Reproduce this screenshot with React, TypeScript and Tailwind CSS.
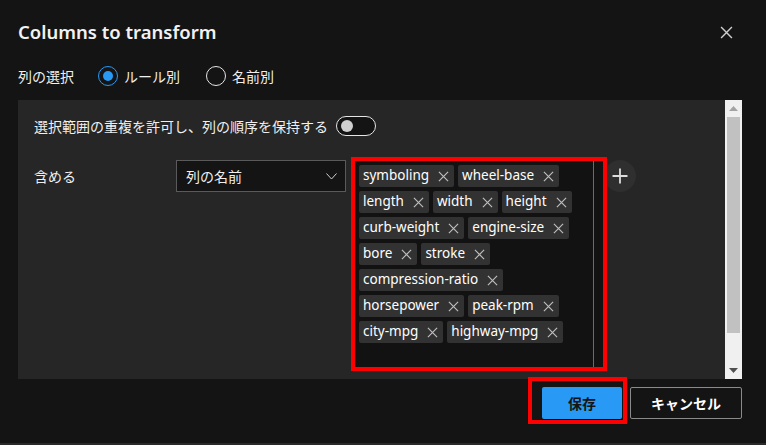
import { useState } from 'react';

const FONT = { fontFamily: '"Noto Sans", "Noto Sans CJK JP", sans-serif' };

const COLUMNS = [
  'symboling', 'wheel-base', 'length', 'width', 'height', 'curb-weight', 'engine-size',
  'bore', 'stroke', 'compression-ratio', 'horsepower', 'peak-rpm', 'city-mpg', 'highway-mpg',
];

const XIcon = ({ size = 11, className = '' }: { size?: number; className?: string }) => (
  <svg width={size} height={size} viewBox="0 0 12 12" className={className}>
    <path d="M1 1 L11 11 M11 1 L1 11" stroke="currentColor" strokeWidth="1.3" fill="none" />
  </svg>
);

function Radio({ checked, label }: { checked: boolean; label: string }) {
  return (
    <label className="flex items-center gap-[6px] cursor-pointer">
      <span
        className={
          'w-5 h-5 rounded-full border-[1.5px] flex items-center justify-center ' +
          (checked ? 'border-[#2899f5]' : 'border-[#e6e6e6]')
        }
      >
        {checked && <span className="w-[10px] h-[10px] rounded-full bg-[#2899f5]" />}
      </span>
      <span className="text-[14px] text-[#f0f0f0]">{label}</span>
    </label>
  );
}

function Tag({ name }: { name: string }) {
  return (
    <span className="h-[22px] flex items-center bg-[#323232] rounded-[2px] pl-[4px] pr-[5px] text-[13.5px] text-white leading-none">
      <span>{name}</span>
      <XIcon className="ml-[9px] text-[#bdbdbd]" />
    </span>
  );
}

export default function App() {
  const [mode, setMode] = useState('rule');
  return (
    <div style={FONT} className="w-[766px] h-[445px] bg-[#141414] flex flex-col overflow-hidden">
      <div className="flex items-center justify-between pl-[18px] pr-[33px] pt-[20px] h-[44px]">
        <h1 className="text-[18.5px] font-semibold text-[#f2f2f2] leading-6">Columns to transform</h1>
        <button className="text-[#cfcfcf]">
          <XIcon size={13} />
        </button>
      </div>

      <div className="flex items-center pl-[18px] mt-[22px] h-5 text-[14px] text-[#f0f0f0]">
        <span className="w-[80px]">列の選択</span>
        <div className="flex items-center gap-[26px]" onClick={() => setMode(mode === 'rule' ? 'name' : 'rule')}>
          <Radio checked={mode === 'rule'} label="ルール別" />
          <Radio checked={mode === 'name'} label="名前別" />
        </div>
      </div>

      <div className="flex ml-[18px] mr-[24px] mt-[14px] h-[279px]">
        <div className="flex-1 bg-[#262626] pl-4 pt-4">
          <div className="flex items-center h-5 gap-[8px]">
            <span className="text-[14px] text-[#f0f0f0]">選択範囲の重複を許可し、列の順序を保持する</span>
            <span className="w-10 h-5 rounded-full border-[1.5px] border-[#e6e6e6] bg-[#141414] flex items-center pl-[4px]">
              <span className="w-3 h-3 rounded-full bg-[#cfcfcf]" />
            </span>
          </div>

          <div className="flex items-start mt-[21px]">
            <span className="w-[142px] h-8 mt-[3px] flex items-center text-[14px] text-[#f0f0f0]">含める</span>
            <div className="w-[170px] h-8 mt-[3px] border border-[#5a5a5a] bg-[#141414] flex items-center justify-between pl-[9px] pr-[8px]">
              <span className="text-[14px] text-[#f0f0f0]">列の名前</span>
              <svg width="11" height="7" viewBox="0 0 11 7">
                <path d="M0.5 0.5 L5.5 6 L10.5 0.5" stroke="#cfcfcf" strokeWidth="1" fill="none" />
              </svg>
            </div>
            <div className="relative z-10 ml-[5px] w-[256px] h-[214px] border-4 border-[#ff0000] bg-[#121212] flex">
              <div className="w-[239px] h-full border-r border-[#6a6a6a] flex flex-wrap content-start gap-x-[4px] gap-y-[4px] pl-[4px] pt-[4px] pr-[2px]">
                {COLUMNS.map(c => <Tag key={c} name={c} />)}
              </div>
            </div>
            <button className="ml-[-3px] mt-[3px] w-8 h-8 rounded-full bg-[#2f2f2f] flex items-center justify-center">
              <svg width="16" height="16" viewBox="0 0 16 16">
                <path d="M8 0.5 V15.5 M0.5 8 H15.5" stroke="#dcdcdc" strokeWidth="1.8" fill="none" />
              </svg>
            </button>
          </div>
        </div>

        <div className="w-[17px] bg-[#f0f0f0] flex flex-col items-center">
          <svg width="9" height="5" viewBox="0 0 9 5" className="mt-[6px]">
            <path d="M0 5 L4.5 0 L9 5 Z" fill="#a3a3a3" />
          </svg>
          <div className="w-[13px] h-[216px] bg-[#c1c1c1] mt-[6px]" />
          <div className="flex-1" />
          <svg width="9" height="5" viewBox="0 0 9 5" className="mb-[6px]">
            <path d="M0 0 L9 0 L4.5 5 Z" fill="#505050" />
          </svg>
        </div>
      </div>

      <div className="flex justify-end items-start mr-[24px] mt-[-2px] gap-[3px]">
        <div className="border-4 border-[#ff0000] pl-[10px] pt-[6px] pr-px pb-px">
          <button className="w-[80px] h-[32px] bg-[#2899f5] text-[14px] font-bold text-[#141414] rounded-[2px]">保存</button>
        </div>
        <button className="mt-[10px] w-[112px] h-[32px] border border-[#8a8a8a] bg-[#141414] text-[14px] font-bold text-white rounded-[2px]">
          キャンセル
        </button>
      </div>

      <div className="flex-1" />
      <div className="h-[2px] bg-[#2a2a2a]" />
    </div>
  );
}
